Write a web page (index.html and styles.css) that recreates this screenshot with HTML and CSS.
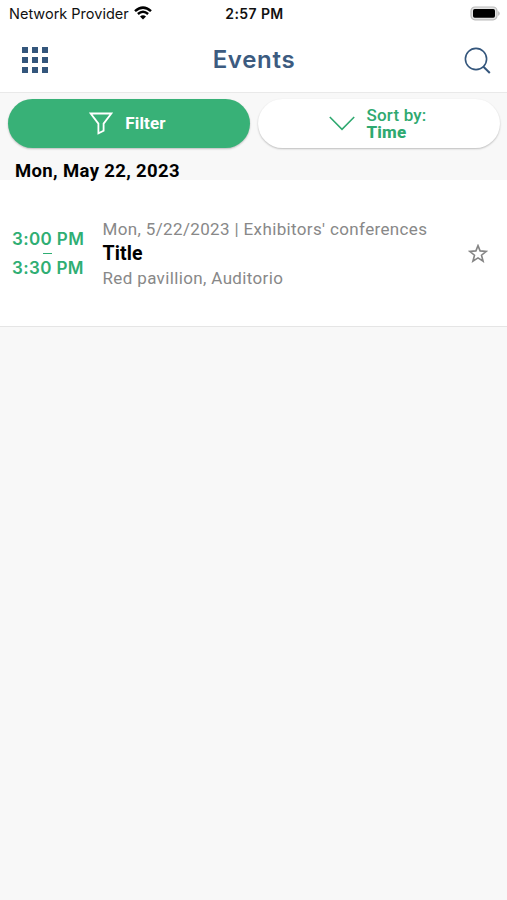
FILE: index.html
```html
<!DOCTYPE html>
<html lang="en">
<head>
<meta charset="utf-8">
<title>Events</title>
<link rel="stylesheet" href="styles.css">
</head>
<body>
<div class="status">
  <div class="carrier"><span class="carrier-name">Network Provider</span>
    <svg class="wifi" width="18" height="14" viewBox="0 0 18 14" fill="none" stroke="#000" stroke-width="2.5"><path d="M1 5.1Q9 -1.9 17 5.1M3.9 8Q9 3.6 14.1 8"/><path d="M9 13.6L6 10.4Q9 8 12 10.4Z" fill="#000" stroke="none"/></svg>
  </div>
  <span class="clock">2:57 PM</span>
  <svg class="battery" width="32" height="15" viewBox="0 0 32 15"><rect x="1" y="1" width="26" height="12.8" rx="4" fill="#e4e4e4" stroke="#bbb" stroke-width="1.2"/><rect x="3" y="3" width="22" height="8.8" rx="1.7" fill="#000"/><path d="M28.3 5Q31 7.5 28.3 10Z" fill="#aaa"/></svg>
</div>
<header class="bar">
  <svg class="grid-icon" width="26" height="26" viewBox="0 0 26 26" fill="#34567c"><path d="M0 0h6v6H0zM10 0h6v6h-6zM20 0h6v6h-6zM0 10h6v6H0zM10 10h6v6h-6zM20 10h6v6h-6zM0 20h6v6H0zM10 20h6v6h-6zM20 20h6v6h-6z"/></svg>
  <h1 class="heading">Events</h1>
  <svg class="search" width="27" height="27" viewBox="0 0 27 27" fill="none" stroke="#34567c"><circle cx="12" cy="12" r="10.6" stroke-width="1.6"/><path d="M19.2 19.5L25.8 26" stroke-width="2"/></svg>
</header>
<div class="controls">
  <button class="pill filter">
    <svg width="24" height="23" viewBox="0 0 24 23" fill="none" stroke="#fff" stroke-width="1.8"><path d="M1.7 1.5H22.3L14.6 11.6V18.8L9.4 21.3V11.6Z"/></svg>
    <span>Filter</span>
  </button>
  <button class="pill sort">
    <svg width="26" height="15" viewBox="0 0 26 15" fill="none" stroke="#2fa970" stroke-width="1.6"><path d="M.8 1L13 13.3 25.2 1"/></svg>
    <span class="sort-label">Sort by:<b>Time</b></span>
  </button>
</div>
<h2 class="day">Mon, May 22, 2023</h2>
<article class="event">
  <div class="times"><span>3:00 PM</span><i class="dash"></i><span>3:30 PM</span></div>
  <div class="info">
    <p class="meta">Mon, 5/22/2023 | Exhibitors' conferences</p>
    <h3 class="title">Title</h3>
    <p class="meta">Red pavillion, Auditorio</p>
  </div>
  <svg class="star" width="20" height="19" viewBox="0 0 20 19" fill="none" stroke="#858585" stroke-width="1.6"><path d="M10 1.6L12.1 6.9 18.3 7.4 13.5 11.2 15.1 17.2 10 13.9 4.9 17.2 6.5 11.2 1.7 7.4 7.9 6.9Z"/></svg>
</article>
</body>
</html>
```
FILE: styles.css
```css
* { box-sizing: border-box; }
body { margin: 0; min-height: 900px; background: #f8f8f8; font-family: Roboto, sans-serif; color: #000; }
h1, h2, h3, p { margin: 0; white-space: nowrap; }
svg { display: block; flex: none; }
.status { height: 28px; background: #fff; display: grid; grid-template-columns: 1fr auto 1fr; padding: 0 5px 0 7px; font: 15px/28px Inter, sans-serif; color: #111; white-space: nowrap; }
.carrier { display: flex; gap: 5px; padding-left: 2px; }
.carrier-name { font-size: 14.5px; }
.wifi { margin-top: 6px; }
.clock { font-size: 14px; font-weight: 600; letter-spacing: .4px; }
.battery { justify-self: end; margin-top: 6px; }
.bar { height: 65px; background: #fff; border-bottom: 1px solid #e9e9e9; display: grid; grid-template-columns: 1fr auto 1fr; align-items: center; padding: 0 15px 0 16px; }
.grid-icon { margin-left: 6px; }
.heading { font: 600 24px/32px Inter, sans-serif; letter-spacing: .7px; color: #3c5b80; }
.search { justify-self: end; margin-right: 1px; }
.controls { display: flex; gap: 8px; padding: 6px 7px 0 8px; }
.pill { height: 49px; flex: 1; border: 0; border-radius: 25px; display: flex; align-items: center; justify-content: center; gap: 12px; padding: 0 3px 0 0; font: 700 17px/17px Roboto, sans-serif; letter-spacing: .18px; box-shadow: 0 1px 2px rgba(0,0,0,.24); }
.filter { background: #38b177; color: #fff; }
.sort { background: #fff; color: #2fa970; }
.sort-label { display: flex; flex-direction: column; text-align: left; font-weight: 500; }
.sort-label b { font-weight: 800; }
.day { height: 32px; padding: 10px 0 0 15px; font-size: 18.5px; line-height: 26px; font-weight: 700; letter-spacing: .36px; }
.event { height: 147px; background: #fff; border-bottom: 1px solid #e5e5e5; display: flex; align-items: center; padding: 0 19px 0 12px; }
.times { width: 90px; display: flex; flex-direction: column; color: #2fae73; font: 600 17px/24px Inter, sans-serif; letter-spacing: .38px; white-space: nowrap; }
.dash { width: 9px; height: 1px; background: #2fae73; margin: 2px 0 2px 31px; }
.info { flex: 1; }
.meta { font-size: 17px; line-height: 24px; letter-spacing: .36px; color: #888; padding-left: .5px; }
.title { font-size: 19.5px; line-height: 24px; padding-top: 1px; font-weight: 700; padding-left: .5px; letter-spacing: .15px; }
```
